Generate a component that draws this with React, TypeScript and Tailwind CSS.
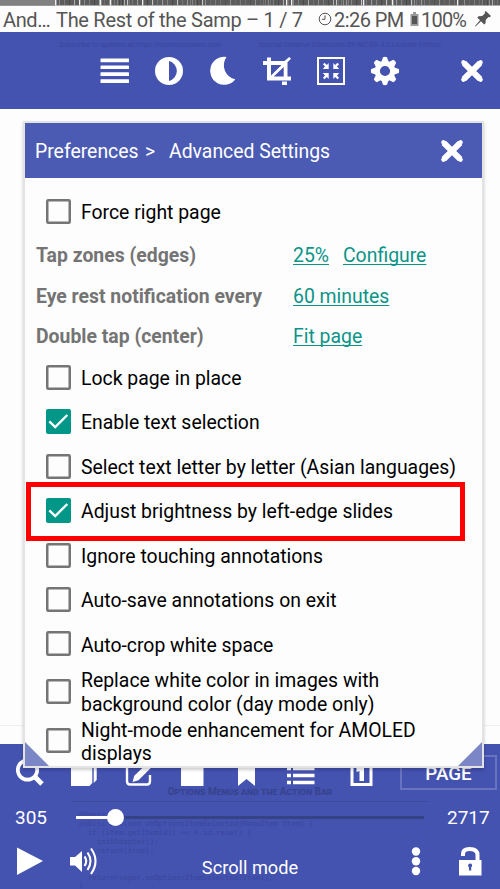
import React from "react";

type CheckProps = { label: React.ReactNode; checked?: boolean; className?: string };

function Art({ box, className, children }: { box: string; className: string; children: React.ReactNode }) {
  return (
    <svg viewBox={box} className={`block shrink-0 ${className}`} fill="currentColor" aria-hidden="true">
      {children}
    </svg>
  );
}

function Checkbox({ checked }: { checked?: boolean }) {
  return checked ? (
    <span className="flex size-[25px] shrink-0 items-center justify-center rounded-[2px] bg-[#009688]">
      <svg viewBox="0 0 25 25" className="size-[25px]" fill="none" stroke="white" strokeWidth="2.4">
        <path d="M3.3 12.3 L9.2 18 L21.3 6" />
      </svg>
    </span>
  ) : (
    <svg viewBox="0 0 25 25" className="size-[25px] shrink-0" fill="none" stroke="#757575" strokeWidth="2.5">
      <rect x="1.25" y="1.25" width="22.5" height="22.5" rx="1" />
    </svg>
  );
}

function CheckRow({ label, checked, className = "h-[44.5px]" }: CheckProps) {
  return (
    <div className={`flex items-center gap-[10px] pl-[21px] ${className}`}>
      <Checkbox checked={checked} />
      <span className="whitespace-nowrap pt-[3px] leading-[23.4px] text-black">{label}</span>
    </div>
  );
}

function ValueRow({ label, values, className }: { label: string; values: string[]; className: string }) {
  return (
    <div className={`flex items-center pl-[11px] pt-[2px] ${className}`}>
      <span className="w-[257px] whitespace-nowrap font-bold text-[#747474]">{label}</span>
      <span className="flex gap-[14px] whitespace-nowrap text-[#0b9488]">
        {values.map((v) => (
          <span key={v} className="underline decoration-1 underline-offset-2 [text-decoration-skip-ink:none]">{v}</span>
        ))}
      </span>
    </div>
  );
}

function Close() {
  return (
    <Art box="0 0 24 24" className="size-6">
      <path d="M3.8 3.8 L20.2 20.2 M20.2 3.8 L3.8 20.2" stroke="currentColor" strokeWidth="6" />
      <path d="M3.4 3.4 L20.6 20.6 M20.6 3.4 L3.4 20.6" stroke="currentColor" strokeWidth="4.4" strokeLinecap="round" />
    </Art>
  );
}

const scanlines = Array.from({ length: 110 }, (_, i) => ({
  x: 56 + ((i * 73) % 443),
  w: 0.5 + (i % 3) * 0.3,
  shade: ["#999", "#777", "#c5c5c5", "#474747", "#858585"][i % 5],
}));

function StatusBar() {
  return (
    <header className="h-8 shrink-0 bg-[#fdfdfd] text-[#555]">
      <svg viewBox="0 0 500 6" className="block h-[6px] w-full">
        <rect width="500" height="5.5" fill="#5c5c5c" />
        <rect width="55" height="5.5" fill="#818181" />
        {scanlines.map((s) => (
          <rect key={s.x} x={s.x} width={s.w} height="5.2" fill={s.shade} />
        ))}
        {[55, 79, 100, 110, 142, 286, 291, 363, 392, 457].map((x) => (
          <rect key={x} x={x} width="1.3" height="5.5" fill="#eee" />
        ))}
      </svg>
      <div className="flex h-[26px] items-center whitespace-pre pl-[3px] pt-[2px] text-[20px] leading-[26px]">
        <span className="w-[53px] shrink-0 tracking-[-0.4px]">And…</span>
        <span className="w-[262px] shrink-0 tracking-[-0.29px]">The Rest of the Samp – 1 / 7</span>
        <Art box="0 0 14 14" className="mb-[3px] mr-[2px] size-[14px]">
          <circle cx="7" cy="7" r="5.8" fill="none" stroke="currentColor" strokeWidth="1" />
          <path d="M7 3.4V7.3H3.9" fill="none" stroke="currentColor" />
        </Art>
        <span className="w-[76px] shrink-0 tracking-[-0.55px]">2:26 PM</span>
        <Art box="0 0 9 14" className="mb-[3px] mr-[2px] h-[14px] w-[9px]">
          <path d="M3 0H6V2H8.5V14H.5V2H3Z" fill="#999" />
          <path d="M2 4H7V12H2Z" />
        </Art>
        <span className="w-[54px] shrink-0 tracking-[-0.8px]">100%</span>
        <Art box="0 0 17 18" className="mb-[3px] h-[18px] w-[17px]">
          <path d="M10.8 1 L16 6 L14.8 7.2 L13.5 7 L10.8 9.8 L10.5 13.2 L9.2 14.4 L6 11.2 L.5 16.5 L0 16 L5 10.2 L2.3 7.4 L3.6 6.2 L7.2 6 L10.1 3.3 L9.7 2Z" />
        </Art>
      </div>
    </header>
  );
}

function Toolbar() {
  return (
    <nav className="relative flex h-[77px] shrink-0 items-start bg-[#4452b0] pl-[88px] pt-[18px] text-white">
      <div className="absolute left-[59px] top-[8px] flex w-[382px] justify-between whitespace-nowrap text-[7.1px] leading-[10px] text-[#3b479f]">
        <span>Subscribe to updates at https://commonsware.com</span>
        <span className="text-[7.25px]">Special Creative Commons BY-NC-SA 4.0 License Edition</span>
      </div>
      <Art box="88 50 54 42" className="h-[42px] w-[54px]">
        {[58.5, 65.4, 72.3, 79.2].map((y) => <rect key={y} x="100.5" y={y} width="28.5" height="3.7" rx=".5" />)}
      </Art>
      <Art box="142 50 54 42" className="h-[42px] w-[54px]">
        <path fillRule="evenodd" d="M169 57a14 14 0 1 0 0 28a14 14 0 1 0 0-28ZM169 61a10.3 10.3 0 0 1 0 20Z" />
      </Art>
      <Art box="196 50 54 42" className="h-[42px] w-[54px]">
        <path d="M226.5 57A14 14 0 1 0 235.3 79.2A14.2 14.2 0 0 1 226.5 57Z" />
      </Art>
      <Art box="250 50 54 42" className="h-[42px] w-[54px]">
        <path d="M267 57.5H271V61H284.5L289.2 57L291 58.8L287.5 62.3V76.5H291V80.5H267V65H263V61H267ZM282 81.5H287V85H282Z" />
        <path d="M271 65H281.5L271 75.5ZM283.7 67V76.5H273.8Z" fill="#4452b0" />
      </Art>
      <Art box="304 50 54 42" className="h-[42px] w-[54px]">
        <path d="M318 58H344V84H318Z" fill="none" stroke="currentColor" strokeWidth="2" />
        {["", "matrix(-1 0 0 1 662 0)", "matrix(1 0 0 -1 0 142)", "matrix(-1 0 0 -1 662 142)"].map((t) => (
          <path key={t} transform={t || undefined} d="M323 64.3L324.5 62.8L326.8 65.1L328.7 63V69H322.8L325 66.6Z" />
        ))}
      </Art>
      <Art box="358 50 54 42" className="h-[42px] w-[54px]">
        {[0, 45, 90, 135, 180, 225, 270, 315].map((a) => (
          <path key={a} transform={`rotate(${a} 385 71)`} d="M381 63L383 57.2Q385 56.5 387 57.2L389 63Z" />
        ))}
        <circle cx="385" cy="71" r="7.7" fill="none" stroke="currentColor" strokeWidth="5.2" />
      </Art>
      <div className="ml-[48px] mt-[9px]"><Close /></div>
    </nav>
  );
}

const pageCode = [
  "@Override",
  "public boolean onOptionsItemSelected(MenuItem item) {",
  "  if (item.getItemId() == R.id.reset) {",
  "    initAdapter();",
  "    return(true);",
  "  }",
  "",
  "  return(super.onOptionsItemSelected(item));",
];

function BottomBar() {
  return (
    <footer className="relative mt-auto h-[145px] shrink-0 bg-[#4452b0] text-white">
      <div className="absolute left-[71px] top-[41px] w-[358px] text-[#37438d]">
        <div className="border-b border-[#3e4a9f] pb-[2px] text-center text-[10px] font-bold leading-[14px] [font-variant:small-caps]">Options Menus and the Action Bar</div>
        <div className="mt-[8px] whitespace-pre pl-[8px] font-['DejaVu_Sans_Mono',monospace] text-[7.35px] leading-[9px] text-[#3b479d]">
          {pageCode.map((line, i) => <div key={i} className="h-[9px]">{line}</div>)}
        </div>
      </div>
      <div className="relative flex h-[49px] items-start">
        <Art box="0 744 400 49" className="h-[49px] w-[400px]">
          <circle cx="27.5" cy="770" r="9.7" fill="none" stroke="currentColor" strokeWidth="3.7" />
          <path d="M34 776L42 784" stroke="currentColor" strokeWidth="5" />
          <path d="M71 760H92.3V783L89.5 786H71ZM93.7 762H96.7V780L93.7 783Z" />
          <path d="M146 762H130Q127 762 127 765V781Q127 784.5 130 784.5H147Q150 784.5 150 781V775" fill="none" stroke="currentColor" strokeWidth="2.4" />
          <path d="M132.5 782L134.3 775.7L148 762.5L152 766.8L138.5 780.3Z" />
          <path d="M181 760H203.5V786H181Z" />
          <path d="M238 760H255V786L246.5 779L238 786Z" />
          {[768.5, 775.5, 782.5].map((y) => <path key={y} d={`M287 ${y - 1.8}h4v3.6h-4zM293 ${y - 1.8}h21.5v3.6H293z`} />)}
          <path d="M352 760H371V784.5H352Z" fill="none" stroke="currentColor" strokeWidth="3" />
          <path d="M356.5 768L361 765H364V781H359.5V771L356.5 772Z" />
        </Art>
        <div className="mt-[11px] flex h-[35px] w-[97px] items-center justify-center border-2 border-[#6974c0] pt-[3px] text-[18.8px] font-medium">PAGE</div>
      </div>
      <div className="relative flex h-[48px] items-center text-[19px]">
        <span className="w-[76px] pl-[15px] pt-[2px]">305</span>
        <span className="relative flex h-4 w-[348px] items-center">
          <span className="h-[3px] w-[39px] bg-white" />
          <span className="mt-px h-[3px] flex-1 bg-[#354286]" />
          <span className="absolute left-[31px] top-0 size-[17px] rounded-full bg-white" />
        </span>
        <span className="ml-[23px] pt-[2px]">2717</span>
      </div>
      <div className="relative flex h-[48px] items-start">
        <Art box="0 841 110 40" className="h-[40px] w-[110px]">
          <path d="M17 847.5L43 861L17 875Z" />
          <path d="M70 857H75L82 851V872L75 865.5H70Z" />
          <path d="M84.5 856.5Q88 861 84.5 866M87.5 852.5Q93.5 861 87.5 870M91 848.5Q100 861 91 874" fill="none" stroke="currentColor" strokeWidth="2.1" />
        </Art>
        <span className="w-[280px] pt-[14px] text-center text-[18.2px] leading-[26px]">Scroll mode</span>
        <Art box="400 841 90 40" className="ml-[10px] h-[40px] w-[90px]">
          <circle cx="416" cy="851.5" r="4.2" /><circle cx="416" cy="861.2" r="4.2" /><circle cx="416" cy="871" r="4.2" />
          <path d="M463 856V854Q463 849 469.5 849Q477.5 849 477.5 855V862" fill="none" stroke="currentColor" strokeWidth="4" />
          <path fillRule="evenodd" d="M459 860H481.5V875.5H459ZM470 863.5a2 2 0 0 0-1 3.7v3.4h2.2v-3.4a2 2 0 0 0-1.2-3.7Z" />
        </Art>
      </div>
      <span className="absolute bottom-0 left-[79px] font-['DejaVu_Sans_Mono',monospace] text-[7.35px] leading-[9px] text-[#3b479d]">{"}"}</span>
    </footer>
  );
}

function PreferencesDialog() {
  return (
    <section className="absolute left-[23px] top-[121px] h-[647px] w-[461px] border-2 border-[#e3e3e3] bg-[#fdfdfd] text-[19.4px] shadow-[0_2px_3px_#0003]">
      <div className="flex h-[55px] items-center bg-[#4b5bb3] pl-[10px] text-[19.4px] text-white">
        <h1 className="flex w-[405px] whitespace-nowrap pt-[3px]"><span className="w-[110px]">Preferences</span><span className="w-[24px]">&gt;</span><span>Advanced Settings</span></h1>
        <Close />
      </div>
      <div className="pt-[11px]">
        <CheckRow label="Force right page" />
        <ValueRow label="Tap zones (edges)" values={["25%", "Configure"]} className="h-[43px] text-[19.4px]" />
        <ValueRow label="Eye rest notification every" values={["60 minutes"]} className="h-[38px] text-[19.4px]" />
        <ValueRow label="Double tap (center)" values={["Fit page"]} className="h-[42px] text-[19.4px]" />
        <CheckRow label="Lock page in place" className="h-[42px]" />
        <CheckRow label="Enable text selection" checked className="h-[46px]" />
        <CheckRow label="Select text letter by letter (Asian languages)" className="h-[43px]" />
        <CheckRow label="Adjust brightness by left-edge slides" checked className="h-[46px]" />
        <CheckRow label="Ignore touching annotations" className="h-[43.5px]" />
        <CheckRow label="Auto-save annotations on exit" />
        <CheckRow label="Auto-crop white space" />
        <CheckRow label={<>Replace white color in images with<br />background color (day mode only)</>} className="h-[50px]" />
        <CheckRow label={<>Night-mode enhancement for AMOLED<br />displays</>} className="h-[49px]" />
      </div>
      <div className="absolute left-[1px] top-[359px] h-[59px] w-[439px] border-[5px] border-[#ff0000]" />
      <svg className="absolute bottom-0 left-0 h-6 w-6" viewBox="0 0 24 24"><path d="M0 0V24H24Z" fill="#7b86c6" /></svg>
      <svg className="absolute bottom-0 right-0 h-6 w-6" viewBox="0 0 24 24"><path d="M24 0V24H0Z" fill="#7b86c6" /></svg>
    </section>
  );
}

export default function App() {
  return (
    <main className="relative flex h-[889px] w-[500px] flex-col overflow-hidden bg-[#fdfdfd] font-[Roboto,sans-serif]">
      <StatusBar />
      <Toolbar />
      <div className="h-[617px] shrink-0 border-b border-[#eee]" />
      <BottomBar />
      <PreferencesDialog />
    </main>
  );
}
